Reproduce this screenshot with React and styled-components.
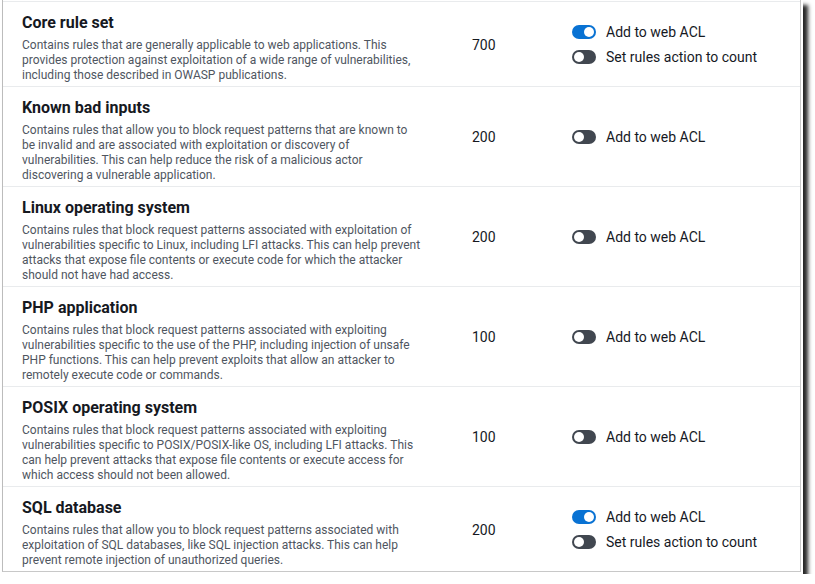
import React from 'react';
import styled, { createGlobalStyle } from 'styled-components';

const GlobalStyle = createGlobalStyle`
  html, body {
    margin: 0;
    padding: 0;
    background: #ffffff;
  }
  body {
    font-family: Roboto, "Liberation Sans", Arial, sans-serif;
    color: #16191f;
  }
`;

// Window frame with the drop shadow of the screenshot
const Frame = styled.div`
  margin-left: 2px;
  width: 799px;
  padding: 0 2px 2px 0;
  background: #ffffff;
  box-shadow: 5px 5px 4px rgba(0, 0, 0, 0.85);
`;

const Panel = styled.div`
  border-left: 1px solid #bcbcbc;
  border-right: 1px solid #c8c8c8;
  border-bottom: 1px solid #c8c8c8;
  padding-top: 1px;
`;

const Row = styled.div`
  display: grid;
  grid-template-columns: 450px 100px 1fr;
  align-items: center;
  padding: 11px 0 3px 19px;
  border-top: 1px solid #e9ebed;
`;

const Info = styled.div`
  display: flex;
  flex-direction: column;
`;

const Title = styled.div`
  font-size: 16px;
  font-weight: 700;
  line-height: 20px;
  margin-bottom: 5px;
  color: #16191f;
`;

const Description = styled.div`
  font-size: 12px;
  line-height: 15px;
  color: #4f565f;
  white-space: nowrap;
`;

const Capacity = styled.div`
  font-size: 14px;
  color: #16191f;
  margin-top: -7px;
`;

const Toggles = styled.div`
  display: flex;
  flex-direction: column;
  gap: 7px;
  margin-top: -7px;
`;

const ToggleRow = styled.label`
  display: flex;
  align-items: center;
  gap: 10px;
  font-size: 14px;
  line-height: 18px;
  color: #16191f;
`;

const Track = styled.span`
  position: relative;
  width: 24px;
  height: 14px;
  border-radius: 7px;
  background: ${p => (p.$on ? '#0972d3' : '#414750')};
  flex-shrink: 0;
`;

const Knob = styled.span`
  position: absolute;
  top: 2px;
  left: ${p => (p.$on ? '12px' : '2px')};
  width: 10px;
  height: 10px;
  border-radius: 50%;
  background: #ffffff;
`;

const Toggle = ({ on, label }) => (
  <ToggleRow>
    <Track $on={on}>
      <Knob $on={on} />
    </Track>
    {label}
  </ToggleRow>
);

const rules = [
  {
    title: 'Core rule set',
    lines: [
      'Contains rules that are generally applicable to web applications. This',
      'provides protection against exploitation of a wide range of vulnerabilities,',
      'including those described in OWASP publications.',
    ],
    capacity: 700,
    added: true,
  },
  {
    title: 'Known bad inputs',
    lines: [
      'Contains rules that allow you to block request patterns that are known to',
      'be invalid and are associated with exploitation or discovery of',
      'vulnerabilities. This can help reduce the risk of a malicious actor',
      'discovering a vulnerable application.',
    ],
    capacity: 200,
  },
  {
    title: 'Linux operating system',
    lines: [
      'Contains rules that block request patterns associated with exploitation of',
      'vulnerabilities specific to Linux, including LFI attacks. This can help prevent',
      'attacks that expose file contents or execute code for which the attacker',
      'should not have had access.',
    ],
    capacity: 200,
  },
  {
    title: 'PHP application',
    lines: [
      'Contains rules that block request patterns associated with exploiting',
      'vulnerabilities specific to the use of the PHP, including injection of unsafe',
      'PHP functions. This can help prevent exploits that allow an attacker to',
      'remotely execute code or commands.',
    ],
    capacity: 100,
  },
  {
    title: 'POSIX operating system',
    lines: [
      'Contains rules that block request patterns associated with exploiting',
      'vulnerabilities specific to POSIX/POSIX-like OS, including LFI attacks. This',
      'can help prevent attacks that expose file contents or execute access for',
      'which access should not been allowed.',
    ],
    capacity: 100,
  },
  {
    title: 'SQL database',
    lines: [
      'Contains rules that allow you to block request patterns associated with',
      'exploitation of SQL databases, like SQL injection attacks. This can help',
      'prevent remote injection of unauthorized queries.',
    ],
    capacity: 200,
    added: true,
  },
];

const App = () => (
  <>
    <GlobalStyle />
    <Frame>
      <Panel>
        {rules.map(rule => (
          <Row key={rule.title}>
            <Info>
              <Title>{rule.title}</Title>
              <Description>
                {rule.lines.map((line, i) => (
                  <React.Fragment key={i}>
                    {i > 0 && <br />}
                    {line}
                  </React.Fragment>
                ))}
              </Description>
            </Info>
            <Capacity>{rule.capacity}</Capacity>
            <Toggles>
              <Toggle on={!!rule.added} label="Add to web ACL" />
              {rule.added && <Toggle on={false} label="Set rules action to count" />}
            </Toggles>
          </Row>
        ))}
      </Panel>
    </Frame>
  </>
);

export default App;
